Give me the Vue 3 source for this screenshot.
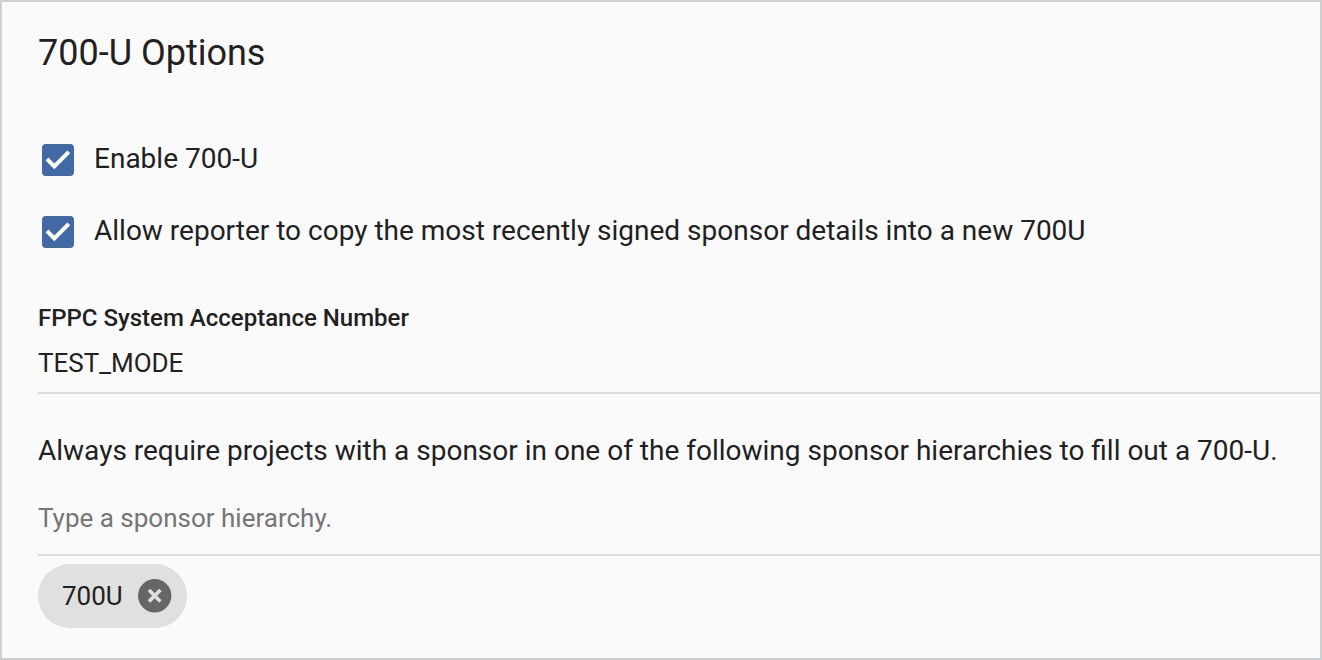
<script setup>
import { ref } from 'vue'

const enabled = ref(true)
const allowCopy = ref(true)
const acceptanceNumber = ref('TEST_MODE')
const query = ref('')
const hierarchies = ref(['700U'])

function removeHierarchy(name) {
  hierarchies.value = hierarchies.value.filter((h) => h !== name)
}
</script>

<template>
  <section class="panel">
    <h1 class="title">700-U Options</h1>

    <div class="checks">
      <label class="check">
        <span class="box">
          <input v-model="enabled" type="checkbox" />
          <svg viewBox="0 0 32 32" aria-hidden="true"><path d="M5 15 12.300 22.300 26.800 7.800" /></svg>
        </span>
        <span>Enable 700-U</span>
      </label>
      <label class="check">
        <span class="box">
          <input v-model="allowCopy" type="checkbox" />
          <svg viewBox="0 0 32 32" aria-hidden="true"><path d="M5 15 12.300 22.300 26.800 7.800" /></svg>
        </span>
        <span>Allow reporter to copy the most recently signed sponsor details into a new 700U</span>
      </label>
    </div>

    <div class="field">
      <label class="caption" for="acceptance">FPPC System Acceptance Number</label>
      <input id="acceptance" v-model="acceptanceNumber" class="line number" type="text" />
    </div>

    <div class="field">
      <label class="prompt" for="hierarchy">Always require projects with a sponsor in one of the following sponsor hierarchies to fill out a 700-U.</label>
      <input id="hierarchy" v-model="query" class="line search" type="text" placeholder="Type a sponsor hierarchy." />
    </div>

    <div class="chips">
      <span v-for="name in hierarchies" :key="name" class="chip">
        {{ name }}
        <button type="button" :aria-label="'Remove ' + name" @click="removeHierarchy(name)">
          <svg viewBox="0 0 40 40" aria-hidden="true">
            <circle cx="19.700" cy="19.700" r="16.700" />
            <path d="M14 14 25.400 25.400M25.400 14 14 25.400" />
          </svg>
        </button>
      </span>
    </div>
  </section>
</template>

<style>
body {
  background: #fafafa;
}
</style>

<style scoped>
.panel {
  box-sizing: border-box;
  min-height: 100vh;
  border: 2px solid #ccd0d3;
  padding: 30px 0 30px 36px;
  background: #fafafa;
  color: #212121;
  font-family: Roboto, sans-serif;
  font-size: 28px;
  line-height: 42px;
}
.title {
  margin: 0;
  font-size: 36px;
  font-weight: 400;
  line-height: 42px;
}
.checks {
  display: flex;
  flex-direction: column;
  gap: 38px;
  margin-top: 68px;
  padding-left: 4px;
}
.check {
  display: flex;
  align-items: flex-end;
  gap: 20px;
  line-height: 34px;
}
.box {
  display: grid;
  flex: none;
  width: 32px;
  height: 32px;
}
.box input,
.box svg {
  grid-area: 1 / 1;
  width: 32px;
  height: 32px;
}
.box input {
  box-sizing: border-box;
  appearance: none;
  margin: 0;
  border: 4px solid #757575;
  border-radius: 4px;
}
.box input:checked {
  border-color: #4169a4;
  background: #4169a4;
}
.box svg {
  pointer-events: none;
  fill: none;
  stroke: #ffffff;
  stroke-width: 4;
}
.box input:not(:checked) + svg {
  visibility: hidden;
}
.field {
  display: flex;
  flex-direction: column;
}
.checks + .field {
  margin-top: 54px;
}
.field + .field {
  margin-top: 36px;
}
.caption {
  font-size: 24px;
  font-weight: 500;
  line-height: 32px;
}
.line {
  box-sizing: border-box;
  width: 100%;
  border: 0;
  border-bottom: 2px solid #dcdcdc;
  border-radius: 0;
  padding: 0;
  outline: 0;
  background: transparent;
  color: inherit;
  font-family: inherit;
  font-size: 26px;
}
.number {
  height: 60px;
}
.search {
  height: 84px;
  padding-top: 10px;
}
.line::placeholder {
  color: #757575;
  opacity: 1;
}
.chips {
  display: flex;
  flex-wrap: wrap;
  gap: 8px;
  margin-top: 8px;
}
.chip {
  display: flex;
  align-items: center;
  gap: 12px;
  height: 64px;
  padding: 0 12px 0 24px;
  border-radius: 32px;
  background: #e0e0e0;
  font-size: 26px;
}
.chip button {
  display: flex;
  border: 0;
  padding: 0;
  background: none;
  color: #666666;
  cursor: pointer;
}
.chip svg {
  width: 40px;
  height: 40px;
  fill: currentColor;
}
.chip path {
  stroke: #e0e0e0;
  stroke-width: 3.6;
}
</style>
